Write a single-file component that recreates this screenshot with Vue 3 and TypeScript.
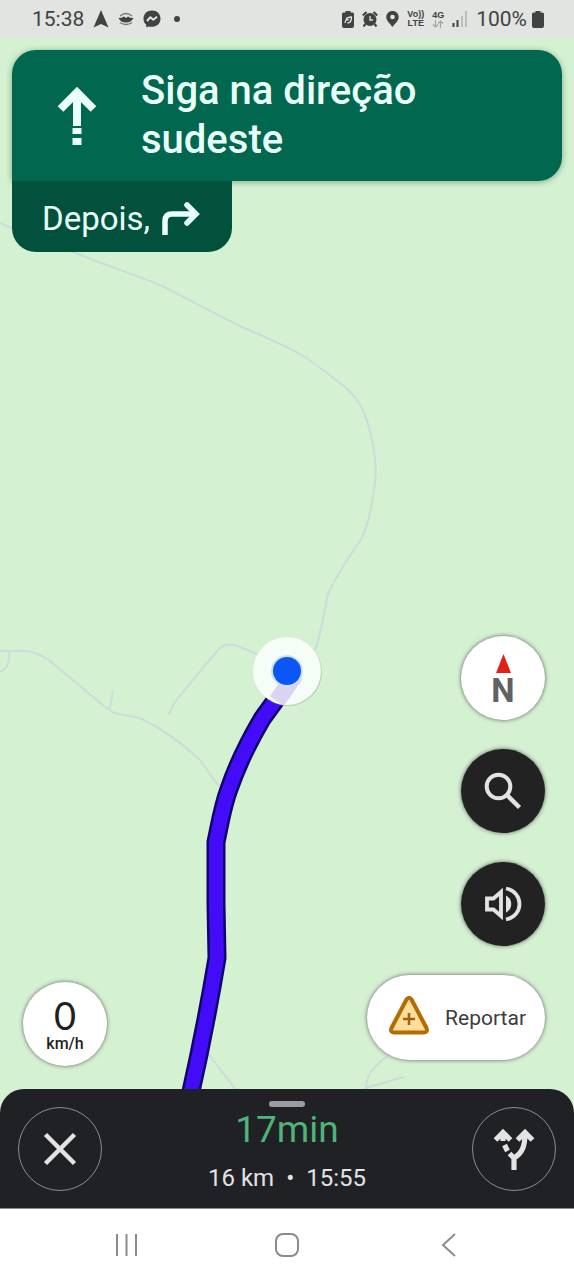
<script setup lang="ts">
import { ref } from 'vue'

interface Trip {
  duration: string
  distance: string
  arrival: string
}

const trip: Trip = { duration: '17min', distance: '16 km', arrival: '15:55' }
const speed = ref<number>(0)

const roads: string[] = [
  'M0 223 C12 229 40 240 78 254 C100 263 130 273 160 285 C190 300 215 314 240 326 C262 336 282 344 300 354 C318 365 332 377 346 388 C358 398 364 410 368 424 C376 452 377 475 374 490 C372 506 368 524 362 538 C350 556 336 575 328 594 C324 612 321 634 315 650',
  'M0 651 L26 651 C42 653 52 662 62 671 C78 684 92 697 109 710 C118 717 130 714 142 719 C164 730 184 745 200 760 C208 770 212 778 219 786',
  'M9 651 C10 662 8 668 0 672',
  'M109 710 C111 703 112 697 113 691',
  'M169 715 C172 703 180 697 188 686 L217 651 C224 642 234 644 240 647 L264 657',
  'M207 1052 L236 1090',
  'M388 1056 C376 1064 366 1074 366 1088 C380 1084 392 1080 404 1077',
]

const route =
  'M293 676 L262 719 C252 736 238 763 229 789 C222 808 220 824 216 842 L216 904 L217 958 C210 1000 200 1052 190 1096'
</script>

<template>
  <div class="phone">
    <header class="status">
      <div class="status-group left">
        <span class="clock">15:38</span>
        <svg class="i-nav" viewBox="0 0 16 18"><path d="M8 0 L15.5 17.5 L8 14 L.5 17.5 Z" fill="#414242" /></svg>
        <svg class="i-bowl" viewBox="0 0 16 14">
          <path d="M.5 6 Q4 6 6 4.500 L8 6 L10 4.500 Q12 6 15.500 6 C14 9 11.500 10.500 8 10.500 C4.500 10.500 2 9 .5 6 Z" fill="#414242" />
          <path d="M2 4 Q8 -1 14 4 M2 10.500 Q8 14.500 14 10.500" fill="none" stroke="#777978" stroke-width="1.300" />
        </svg>
        <svg class="i-chat" viewBox="0 0 18 18">
          <path d="M9 .5 C4 .5 .5 4 .5 8.700 C.5 11.200 1.500 13.300 3.200 14.800 L3.300 17.300 L6 16.500 C12 18 17.500 14.500 17.500 8.700 C17.500 4 14 .5 9 .5 Z" fill="#414242" />
          <path d="M4 11 L7.400 7.300 L10.300 9.700 L14 6.800" fill="none" stroke="#e2e4e2" stroke-width="2" stroke-linejoin="round" />
        </svg>
        <span class="dot"></span>
      </div>
      <div class="status-group right">
        <svg class="i-battery" viewBox="0 0 12 17">
          <path d="M3.500 0 H8.500 V1.500 H10.500 Q12 1.500 12 3 V15 Q12 17 10 17 H2 Q0 17 0 15 V3 Q0 1.500 1.500 1.500 H3.500 Z" fill="#414242" />
          <path d="M3 12 C3.500 9 5 8 7 9 M4 8.500 C5 6.500 7 6 9.500 6 C9.500 9.500 8.500 12 5.500 12" fill="none" stroke="#e2e4e2" stroke-width="1.300" />
        </svg>
        <svg class="i-alarm" viewBox="0 0 16 16">
          <path d="M.8 4.500 L4.500 1 M15.200 4.500 L11.500 1 M3.500 13 L1.500 15.500 M12.500 13 L14.500 15.500" stroke="#414242" stroke-width="2.200" />
          <circle cx="8" cy="8.500" r="6.500" fill="#414242" />
          <path d="M8 5 V9 H11" fill="none" stroke="#e2e4e2" stroke-width="1.300" />
        </svg>
        <svg class="i-pin" viewBox="0 0 13 16">
          <path fill-rule="evenodd" d="M6.500 0 C2.800 0 .3 2.700 .3 6 C.3 10 4 12.500 6.500 16 C9 12.500 12.700 10 12.700 6 C12.700 2.700 10.200 0 6.500 0 Z M6.500 3.700 A2.300 2.300 0 1 1 6.500 8.300 A2.300 2.300 0 1 1 6.500 3.700 Z" fill="#414242" />
        </svg>
        <span class="tiny"><span>Vo))</span><span>LTE</span></span>
        <span class="tiny net">
          <span>4G</span>
          <svg class="i-arrows" viewBox="0 0 12 8"><path d="M3.500 0 V7 M1 4.500 L3.500 7 L6 4.500 M8.500 8 V1 M6 3.500 L8.500 1 L11 3.500" fill="none" stroke="#a4a6a4" stroke-width="1.200" /></svg>
        </span>
        <svg class="i-signal" viewBox="0 0 16 16">
          <path d="M1.500 12 V16 M5.500 9 V16" stroke="#414242" stroke-width="2" />
          <path d="M10 5 V16 M14 0 V16" stroke="#bcbebc" stroke-width="2" />
        </svg>
        <span class="charge">
          <span class="percent">100%</span>
          <svg class="i-battery" viewBox="0 0 12 17">
            <path d="M3.500 0 H8.500 V1.500 H10.500 Q12 1.500 12 3 V15 Q12 17 10 17 H2 Q0 17 0 15 V3 Q0 1.500 1.500 1.500 H3.500 Z" fill="#414242" />
          </svg>
        </span>
      </div>
    </header>

    <main class="map">
      <svg class="canvas" viewBox="0 38 574 1170" preserveAspectRatio="xMidYMid slice" aria-hidden="true">
        <path v-for="road in roads" :key="road" :d="road" class="road" />
        <path :d="route" class="route-edge" />
        <path :d="route" class="route-fill" />
        <circle cx="288" cy="672" r="34" fill="#9fb49f" opacity=".5" />
        <circle cx="287" cy="671" r="34" fill="#f6fdf6" />
        <path d="M295 675 L277 701" stroke="#dcd2f2" stroke-width="17" />
        <circle cx="287" cy="671" r="16" fill="#cfe0fb" />
        <circle cx="287" cy="671" r="14" fill="#0b57f5" />
      </svg>

      <section class="guidance">
        <div class="step">
          <svg class="i-straight" viewBox="0 0 42 60">
            <path d="M21 40 V8 M4.500 23 L21 6.500 L37.500 23" fill="none" stroke="#eafffa" stroke-width="8" />
            <path d="M16.500 42 H25.500 V48 H16.500 Z M16.500 52 H25.500 V59 H16.500 Z" fill="#eafffa" />
          </svg>
          <h1>Siga na direção sudeste</h1>
        </div>
        <div class="next">
          <span>Depois,</span>
          <svg class="i-turn" viewBox="0 0 38 34">
            <path d="M3 33 V19 Q3 12 10 12 H33" fill="none" stroke="#eafffa" stroke-width="5.500" />
            <path d="M25 3 L34 12 L25 21" fill="none" stroke="#eafffa" stroke-width="5.500" stroke-linecap="round" />
          </svg>
        </div>
      </section>

      <section class="controls">
        <div class="speed"><strong>{{ speed }}</strong><span>km/h</span></div>
        <div class="actions">
          <button class="round light" type="button" aria-label="Norte">
            <svg class="needle" viewBox="0 0 15 19"><path d="M7.500 0 L15 19 H0 Z" fill="#e0211b" /></svg>
            <span>N</span>
          </button>
          <button class="round dark" type="button" aria-label="Pesquisar">
            <svg class="glyph" viewBox="0 0 38 38">
              <circle cx="14.500" cy="14.500" r="11.800" fill="none" stroke="#e3e3e3" stroke-width="4" />
              <path d="M23 23 L35.500 35.500" stroke="#e3e3e3" stroke-width="4.500" />
            </svg>
          </button>
          <button class="round dark" type="button" aria-label="Som">
            <svg class="glyph" viewBox="0 0 38 38">
              <path d="M3 13.500 H9.500 L17 7 V31 L9.500 24.500 H3 Z" fill="none" stroke="#e3e3e3" stroke-width="3.800" />
              <path d="M22 10.500 C29 14 29 24 22 27.500 Z" fill="#e3e3e3" />
              <path d="M22 3.500 C40 7 40 31 22 34.500" fill="none" stroke="#e3e3e3" stroke-width="3.800" />
            </svg>
          </button>
          <button class="report" type="button">
            <svg class="i-warn" viewBox="0 0 42 40">
              <path d="M18.500 4.500 Q21 1 23.500 4.500 L38.500 33 Q40 37.500 36 37.500 H6 Q2 37.500 3.500 33 Z" fill="#fddf9b" stroke="#b26c00" stroke-width="4" stroke-linejoin="round" />
              <path d="M21 18 V30 M15 24 H27" stroke="#9c6410" stroke-width="2.600" />
            </svg>
            <span>Reportar</span>
          </button>
        </div>
      </section>

      <section class="sheet">
        <button class="ring" type="button" aria-label="Fechar">
          <svg class="glyph" viewBox="0 0 38 38"><path d="M4.500 4.500 L33.500 33.500 M33.500 4.500 L4.500 33.500" stroke="#e3e3e6" stroke-width="4.500" /></svg>
        </button>
        <div class="summary">
          <span class="handle"></span>
          <strong>{{ trip.duration }}</strong>
          <p><span>{{ trip.distance }}</span><span>•</span><span>{{ trip.arrival }}</span></p>
        </div>
        <button class="ring" type="button" aria-label="Rotas alternativas">
          <svg class="i-fork" viewBox="0 0 42 44">
            <path d="M21 43 V29 M21 31 C29 26 32 20 32 6 M24.500 13 L32 5.500 L39.500 13" fill="none" stroke="#e3e3e6" stroke-width="5.200" />
            <path d="M2.500 13 L10 5.500 L17.500 13 M10 5 V14 M11.500 18 L14.500 24 M16.500 26.500 L21 31" fill="none" stroke="#e3e3e6" stroke-width="5.200" />
          </svg>
        </button>
      </section>
    </main>

    <nav class="system">
      <button type="button" aria-label="Recentes"><svg viewBox="0 0 26 26"><path d="M4 2 V24 M13.500 2 V24 M23 2 V24" /></svg></button>
      <button type="button" aria-label="Início"><svg viewBox="0 0 26 26"><rect x="2" y="2" width="22" height="22" rx="7" /></svg></button>
      <button type="button" aria-label="Voltar"><svg viewBox="0 0 26 26"><path d="M20 2 L8 13 L20 24" /></svg></button>
    </nav>
  </div>
</template>

<style>
body {
  margin: 0;
}
</style>

<style scoped>
.phone {
  display: flex;
  flex-direction: column;
  min-height: 100vh;
  font-family: Roboto, "Liberation Sans", sans-serif;
  background: #fff;
}
button {
  padding: 0;
  border: 0;
  background: none;
  font: inherit;
  cursor: pointer;
}
svg {
  display: block;
  flex: none;
}
.status {
  display: flex;
  justify-content: space-between;
  align-items: center;
  height: 38px;
  padding: 0 30px 0 32px;
  background: #e2e4e2;
  color: #414242;
}
.status-group {
  display: flex;
  align-items: center;
}
.left { gap: 9px; }
.right { gap: 8px; }
.charge {
  display: flex;
  align-items: center;
  gap: 5px;
}
.clock,
.percent {
  font-size: 21px;
  line-height: 24px;
}
.i-nav { width: 16px; height: 18px; }
.i-bowl { width: 16px; height: 14px; }
.i-chat { width: 18px; height: 18px; }
.i-battery { width: 12px; height: 17px; }
.i-alarm { width: 16px; height: 16px; }
.i-pin { width: 13px; height: 16px; }
.i-arrows { width: 12px; height: 8px; }
.i-signal { width: 16px; height: 16px; }
.dot {
  width: 6px;
  height: 6px;
  margin-left: 4px;
  border-radius: 50%;
  background: #414242;
}
.tiny {
  display: flex;
  flex-direction: column;
  align-items: center;
  font-family: "Liberation Sans", sans-serif;
  font-size: 9px;
  font-weight: 700;
  line-height: 9px;
}
.map {
  position: relative;
  flex: 1;
  display: flex;
  flex-direction: column;
  background: #d4f2d2;
}
.canvas {
  position: absolute;
  inset: 0;
  width: 100%;
  height: 100%;
}
.road {
  fill: none;
  stroke: #cbdddb;
  stroke-width: 2;
}
.route-edge {
  fill: none;
  stroke: #12046c;
  stroke-width: 19;
}
.route-fill {
  fill: none;
  stroke: #430cf8;
  stroke-width: 14;
}
.guidance,
.controls,
.sheet {
  position: relative;
}
.guidance {
  padding: 12px;
}
.step {
  display: flex;
  gap: 43px;
  padding: 16px 44px 17px;
  border-radius: 24px 24px 24px 0;
  background: #01684f;
  box-shadow: 0 1px 6px rgba(0, 60, 30, 0.4);
  color: #eafffa;
}
.i-straight {
  width: 42px;
  height: 60px;
  margin-top: 20px;
}
h1 {
  flex: 1;
  max-width: 340px;
  margin: 0;
  font-size: 40px;
  font-weight: 500;
  line-height: 49px;
}
.next {
  position: relative;
  display: flex;
  align-items: center;
  gap: 12px;
  width: 220px;
  height: 71px;
  box-sizing: border-box;
  padding: 4px 30px 0;
  border-radius: 0 0 24px 24px;
  background: #01513d;
  color: #eafffa;
  font-size: 33px;
  line-height: 40px;
}
.i-turn { width: 38px; height: 34px; }
.controls {
  display: flex;
  justify-content: space-between;
  align-items: flex-end;
  margin-top: auto;
  padding: 0 29px 23px 23px;
}
.speed {
  display: flex;
  flex-direction: column;
  align-items: center;
  width: 84px;
  height: 84px;
  box-sizing: border-box;
  padding-top: 12px;
  border-radius: 50%;
  background: #fff;
  box-shadow: 0 0 4px rgba(60, 30, 40, 0.7);
  color: #1f1f1f;
}
.speed strong {
  font-family: Lato, Roboto, sans-serif;
  font-size: 38px;
  font-weight: 400;
  line-height: 42px;
}
.speed span {
  font-size: 16px;
  font-weight: 500;
  line-height: 16px;
}
.actions {
  display: flex;
  flex-direction: column;
  align-items: flex-end;
  gap: 29px;
  padding-bottom: 6px;
}
.round {
  display: flex;
  flex-direction: column;
  align-items: center;
  justify-content: center;
  width: 84px;
  height: 84px;
  border-radius: 50%;
  box-shadow: 0 0 4px rgba(30, 30, 30, 0.7);
}
.light {
  justify-content: flex-start;
  box-sizing: border-box;
  padding-top: 18px;
  background: #fff;
  color: #5f6163;
  font-size: 33px;
  font-weight: 700;
  line-height: 36px;
}
.dark { background: #222; }
.needle { width: 15px; height: 19px; }
.glyph { width: 38px; height: 38px; }
.report {
  display: flex;
  align-items: center;
  gap: 15px;
  height: 85px;
  padding: 0 19px 0 21px;
  border-radius: 43px;
  background: #fff;
  box-shadow: 0 0 4px rgba(60, 30, 60, 0.7);
  color: #3c3c3e;
  font-size: 21px;
}
.i-warn { width: 42px; height: 40px; margin-bottom: 6px; }
.sheet {
  display: flex;
  justify-content: space-between;
  padding: 18px 18px 17px;
  border-radius: 24px 24px 0 0;
  background: #202124;
}
.ring {
  display: flex;
  align-items: center;
  justify-content: center;
  width: 84px;
  height: 84px;
  box-sizing: border-box;
  border: 1px solid #8b8c8f;
  border-radius: 50%;
}
.i-fork { width: 42px; height: 44px; }
.summary {
  display: flex;
  flex-direction: column;
  align-items: center;
  margin-top: -6px;
  color: #e3e3e6;
}
.handle {
  width: 36px;
  height: 6px;
  border-radius: 3px;
  background: #9a9ba3;
}
.summary strong {
  color: #4fb477;
  font-size: 37px;
  font-weight: 400;
  line-height: 46px;
}
.summary p {
  display: flex;
  gap: 12px;
  margin: 12px 0 0;
  font-size: 24px;
  line-height: 26px;
}
.system {
  display: flex;
  justify-content: center;
  gap: 135px;
  height: 72px;
  box-sizing: border-box;
  border-top: 1px solid #8b8c8f;
  align-items: center;
  background: #fff;
}
.system svg {
  width: 26px;
  height: 26px;
  fill: none;
  stroke: #8b8b8b;
  stroke-width: 2;
}
</style>
